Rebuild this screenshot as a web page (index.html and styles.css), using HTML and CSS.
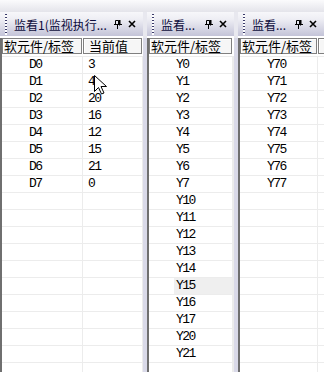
FILE: index.html
```html
<!DOCTYPE html>
<html lang="zh-CN">
<head>
  <meta charset="UTF-8" />
  <title>监看</title>
  <link rel="stylesheet" href="styles.css">
</head>
<body>

<div class="topband"></div>

<div class="dock">

  <!-- 监看1 -->
  <section class="pane pane-main">
    <header class="title">
      <i class="grip"></i>
      <span class="name">监看1(监视执行...</span>
      <svg class="pin" width="8" height="9" viewBox="0 0 8 9"><path d="M1.5 0.5h3v4h-3z" fill="none" stroke="#000"/><path d="M5 0h1v5H5z M0 4.5h8 M3.5 5v4" stroke="#000" fill="#000"/></svg>
      <svg class="close" width="8" height="8" viewBox="0 0 8 8"><path d="M1 1l6 6M7 1L1 7" stroke="#000" stroke-width="1.6"/></svg>
    </header>
    <div class="grid">
      <div class="head"><span class="h1">软元件/标签</span><span class="h2">当前值</span></div>
      <div class="row"><span class="c1">D0</span><span class="c2">3</span></div>
      <div class="row"><span class="c1">D1</span><span class="c2">4</span></div>
      <div class="row"><span class="c1">D2</span><span class="c2">20</span></div>
      <div class="row"><span class="c1">D3</span><span class="c2">16</span></div>
      <div class="row"><span class="c1">D4</span><span class="c2">12</span></div>
      <div class="row"><span class="c1">D5</span><span class="c2">15</span></div>
      <div class="row"><span class="c1">D6</span><span class="c2">21</span></div>
      <div class="row"><span class="c1">D7</span><span class="c2">0</span></div>
      <div class="row"><span class="c1"></span><span class="c2"></span></div>
      <div class="row"><span class="c1"></span><span class="c2"></span></div>
      <div class="row"><span class="c1"></span><span class="c2"></span></div>
      <div class="row"><span class="c1"></span><span class="c2"></span></div>
      <div class="row"><span class="c1"></span><span class="c2"></span></div>
      <div class="row"><span class="c1"></span><span class="c2"></span></div>
      <div class="row"><span class="c1"></span><span class="c2"></span></div>
      <div class="row"><span class="c1"></span><span class="c2"></span></div>
      <div class="row"><span class="c1"></span><span class="c2"></span></div>
      <div class="row"><span class="c1"></span><span class="c2"></span></div>
      <div class="row"><span class="c1"></span><span class="c2"></span></div>
    </div>
  </section>

  <div class="splitter"></div>

  <!-- 监看2 -->
  <section class="pane pane-mid">
    <header class="title">
      <i class="grip"></i>
      <span class="name">监看...</span>
      <svg class="pin" width="8" height="9" viewBox="0 0 8 9"><path d="M1.5 0.5h3v4h-3z" fill="none" stroke="#000"/><path d="M5 0h1v5H5z M0 4.5h8 M3.5 5v4" stroke="#000" fill="#000"/></svg>
      <svg class="close" width="8" height="8" viewBox="0 0 8 8"><path d="M1 1l6 6M7 1L1 7" stroke="#000" stroke-width="1.6"/></svg>
    </header>
    <div class="grid">
      <div class="head"><span class="h1">软元件/标签</span></div>
      <div class="row"><span class="c1">Y0</span></div>
      <div class="row"><span class="c1">Y1</span></div>
      <div class="row"><span class="c1">Y2</span></div>
      <div class="row"><span class="c1">Y3</span></div>
      <div class="row"><span class="c1">Y4</span></div>
      <div class="row"><span class="c1">Y5</span></div>
      <div class="row"><span class="c1">Y6</span></div>
      <div class="row"><span class="c1">Y7</span></div>
      <div class="row"><span class="c1">Y10</span></div>
      <div class="row"><span class="c1">Y11</span></div>
      <div class="row"><span class="c1">Y12</span></div>
      <div class="row"><span class="c1">Y13</span></div>
      <div class="row"><span class="c1">Y14</span></div>
      <div class="row"><span class="c1 selected">Y15</span></div>
      <div class="row"><span class="c1">Y16</span></div>
      <div class="row"><span class="c1">Y17</span></div>
      <div class="row"><span class="c1">Y20</span></div>
      <div class="row"><span class="c1">Y21</span></div>
      <div class="row"><span class="c1"></span></div>
    </div>
  </section>

  <div class="splitter"></div>

  <!-- 监看3 -->
  <section class="pane pane-last">
    <header class="title">
      <i class="grip"></i>
      <span class="name">监看...</span>
      <svg class="pin" width="8" height="9" viewBox="0 0 8 9"><path d="M1.5 0.5h3v4h-3z" fill="none" stroke="#000"/><path d="M5 0h1v5H5z M0 4.5h8 M3.5 5v4" stroke="#000" fill="#000"/></svg>
      <svg class="close" width="8" height="8" viewBox="0 0 8 8"><path d="M1 1l6 6M7 1L1 7" stroke="#000" stroke-width="1.6"/></svg>
    </header>
    <div class="grid">
      <div class="head"><span class="h1">软元件/标签</span><span class="h2"></span></div>
      <div class="row"><span class="c1">Y70</span><span class="c2"></span></div>
      <div class="row"><span class="c1">Y71</span><span class="c2"></span></div>
      <div class="row"><span class="c1">Y72</span><span class="c2"></span></div>
      <div class="row"><span class="c1">Y73</span><span class="c2"></span></div>
      <div class="row"><span class="c1">Y74</span><span class="c2"></span></div>
      <div class="row"><span class="c1">Y75</span><span class="c2"></span></div>
      <div class="row"><span class="c1">Y76</span><span class="c2"></span></div>
      <div class="row"><span class="c1">Y77</span><span class="c2"></span></div>
      <div class="row"><span class="c1"></span><span class="c2"></span></div>
      <div class="row"><span class="c1"></span><span class="c2"></span></div>
      <div class="row"><span class="c1"></span><span class="c2"></span></div>
      <div class="row"><span class="c1"></span><span class="c2"></span></div>
      <div class="row"><span class="c1"></span><span class="c2"></span></div>
      <div class="row"><span class="c1"></span><span class="c2"></span></div>
      <div class="row"><span class="c1"></span><span class="c2"></span></div>
      <div class="row"><span class="c1"></span><span class="c2"></span></div>
      <div class="row"><span class="c1"></span><span class="c2"></span></div>
      <div class="row"><span class="c1"></span><span class="c2"></span></div>
      <div class="row"><span class="c1"></span><span class="c2"></span></div>
    </div>
  </section>

</div>

<!-- mouse pointer over the value column -->
<svg class="cursor" width="13" height="20" viewBox="0 0 13 20"><path d="M0.5 0.5v16l4-4 3 6.5 2.5-1-3-6.5h5.5z" fill="#fff" stroke="#000"/></svg>

</body>
</html>
```

FILE: styles.css
```css
:root {
  --grid-line: #ececec;
  --header-border: #7f7f7f;
  --pane-edge: #6f6f6f;
  --split-bg: #d9d9e8;
  --title-text: #0c0c3c;
}

html, body {
  margin: 0;
  height: 372px;
  overflow: hidden;
}

body {
  background: #fff;
  font-family: "Noto Sans CJK SC", sans-serif;
  position: relative;
}

.topband {
  height: 12px;
  background: linear-gradient(#fbfbfc, #e4e4ea);
}

.dock {
  display: flex;
  height: 360px;
}

.pane {
  display: flex;
  flex-direction: column;
  overflow: hidden;
  background: #fff;
}

.pane-main { width: 143px; }
.pane-mid  { width: 87px; }
.pane-last { flex: 1; }

.splitter {
  width: 4px;
  background:
    linear-gradient(#e8e8ef, #e8e8ef) top / 100% 26px no-repeat,
    var(--split-bg);
}

/* title bar */
.title {
  height: 24px;
  display: flex;
  align-items: center;
  padding-left: 5px;
  background: linear-gradient(#f7f7fa, #eeeef4 30%, #c4c4d8);
  margin-bottom: 2px;
}

.grip {
  width: 2px;
  height: 21px;
  margin-right: 7px;
  background: linear-gradient(#3a3a6a 0 50%, #fff 50%) 0 0 / 2px 3px repeat-y;
}

.name {
  font-size: 12px;
  line-height: 17px;
  color: var(--title-text);
  white-space: nowrap;
  flex: 1;
  min-width: 0;
}

.pin {
  margin-right: 6px;
  flex: none;
}

.close {
  margin-right: 7px;
  flex: none;
}

/* grid */
.grid {
  flex: 1;
  border-left: 2px solid var(--pane-edge);
  overflow: hidden;
}

.head {
  display: flex;
  height: 16px;
  margin-bottom: 2px;
  white-space: nowrap;
}

.head span {
  box-sizing: border-box;
  height: 16px;
  border: 1px solid var(--header-border);
  background: #f6f6f6;
  box-shadow: inset 1px 1px #fff;
  font-size: 13px;
  line-height: 14px;
  padding-left: 1px;
  color: #000;
  flex: none;
}

.row {
  display: flex;
  height: 17px;
  box-sizing: border-box;
  border-top: 1px solid var(--grid-line);
  font-family: "Liberation Mono", monospace;
  font-size: 13px;
  letter-spacing: -1.6px;
  line-height: 16px;
  color: #000;
}

.row span {
  box-sizing: border-box;
  border-right: 1px solid var(--grid-line);
  flex: none;
  height: 16px;
}

.pane-main .c1 { width: 81px; }
.pane-main .h1 { width: 80px; margin-right: 1px; }
.pane-main .h2 { width: 59px; padding-left: 5px; }
.pane-main .c2 { width: 60px; padding-left: 5px; }

.pane-mid .h1 { width: 83px; }
.pane-mid .c1 { width: 84px; }
.pane-mid .row { border-right: 1px solid var(--grid-line); }

.pane-last .h1 { width: 77px; margin-right: 1px; }
.pane-last .c1 { width: 78px; }
.pane-last .h2, .pane-last .c2 { width: 60px; }

.row .c1 { padding-left: 27px; }

.row .c1.selected {
  background: linear-gradient(to right, transparent 25px, #efefef 25px);
}

.cursor {
  position: absolute;
  left: 94px;
  top: 75px;
}
```
